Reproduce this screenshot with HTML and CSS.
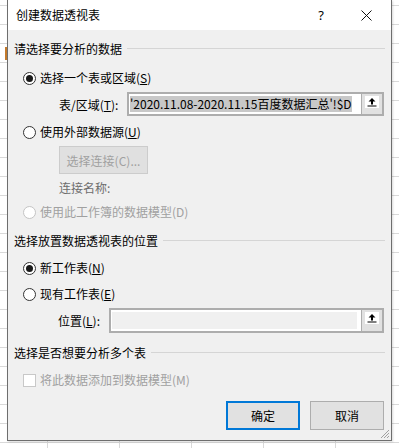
FILE: index.html
```html
<!DOCTYPE html>
<html lang="zh-CN">
<head>
  <meta charset="UTF-8">
  <title>创建数据透视表</title>
  <link rel="stylesheet" href="styles.css">
</head>
<body>
<div class="sheet">
  <div class="active-cell"></div>
  <div class="dialog">
    <div class="titlebar">
      <span class="title">创建数据透视表</span>
      <span class="help">?</span>
      <svg class="close" width="11" height="11" viewBox="0 0 11 11">
        <path d="M0.5 0.5 L10.5 10.5 M10.5 0.5 L0.5 10.5" stroke="#111" stroke-width="1" fill="none"/>
      </svg>
    </div>

    <div class="content">
      <!-- 数据来源 -->
      <div class="group-title mt-10"><span>请选择要分析的数据</span></div>

      <div class="option mt-12">
        <span class="radio checked"></span>
        <span>选择一个表或区域(<u>S</u>)</span>
      </div>
      <div class="field-row range-row mt-5">
        <label class="field-label">表/区域(<u>T</u>):</label>
        <div class="ref-box">
          <div class="ref-input"><span class="sel">'2020.11.08-2020.11.15百度数据汇总'!$D</span></div>
          <div class="ref-btn">
            <span class="ref-icon">
              <svg width="14" height="12" viewBox="0 0 14 12">
                <path d="M7 2 L10.5 5.5 L8 5.5 L8 8.5 L6 8.5 L6 5.5 L3.5 5.5 Z" fill="#000"/>
                <rect x="2.5" y="9.5" width="9" height="1" fill="#000"/>
              </svg>
            </span>
          </div>
        </div>
      </div>

      <div class="option mt-7">
        <span class="radio"></span>
        <span>使用外部数据源(<u>U</u>)</span>
      </div>
      <button class="conn-btn mt-5" disabled>选择连接(C)...</button>
      <div class="conn-name mt-6">连接名称:</div>
      <div class="option disabled mt-7">
        <span class="radio"></span>
        <span>使用此工作簿的数据模型(D)</span>
      </div>

      <!-- 放置位置 -->
      <div class="group-title mt-11"><span>选择放置数据透视表的位置</span></div>

      <div class="option mt-10">
        <span class="radio checked"></span>
        <span>新工作表(<u>N</u>)</span>
      </div>
      <div class="option mt-8">
        <span class="radio"></span>
        <span>现有工作表(<u>E</u>)</span>
      </div>
      <div class="field-row loc-row mt-5">
        <label class="field-label">位置(<u>L</u>):</label>
        <div class="ref-box">
          <div class="ref-input readonly"><div class="ro-fill"></div></div>
          <div class="ref-btn">
            <span class="ref-icon">
              <svg width="14" height="12" viewBox="0 0 14 12">
                <path d="M7 2 L10.5 5.5 L8 5.5 L8 8.5 L6 8.5 L6 5.5 L3.5 5.5 Z" fill="#000"/>
                <rect x="2.5" y="9.5" width="9" height="1" fill="#000"/>
              </svg>
            </span>
          </div>
        </div>
      </div>

      <!-- 多个表 -->
      <div class="group-title mt-11"><span>选择是否想要分析多个表</span></div>
      <div class="option disabled mt-10">
        <span class="check"></span>
        <span>将此数据添加到数据模型(M)</span>
      </div>

      <div class="actions mt-12">
        <button class="btn primary">确定</button>
        <button class="btn">取消</button>
      </div>
    </div>

    <svg class="grip" width="10" height="10" viewBox="0 0 10 10">
      <path d="M9 1 L1 9 M9 4 L4 9 M9 7 L7 9" stroke="#a0a0a0" stroke-width="1" fill="none"/>
    </svg>
  </div>
</div>
</body>
</html>
```

FILE: styles.css
```css
body {
  margin: 0;
  font-family: "Noto Sans CJK SC", "Noto Sans", sans-serif;
  font-size: 12px;
  color: #000;
  background: #fff;
}
.sheet {
  position: relative;
  width: 399px;
  height: 448px;
  overflow: hidden;
  background-color: #fff;
  background-image:
    repeating-linear-gradient(to bottom, transparent 0, transparent 5px, #d9d9d9 5px, #d9d9d9 6px, transparent 6px, transparent 19px),
    repeating-linear-gradient(to right, transparent 0, transparent 47px, #d9d9d9 47px, #d9d9d9 48px, transparent 48px, transparent 72px);
}
.active-cell {
  position: absolute;
  left: 5px;
  top: 47px;
  width: 2px;
  height: 13px;
  background: #c47a2c;
}
.dialog {
  position: relative;
  margin-left: 7px;
  width: 383px;
  height: 440px;
  border: 1px solid #6e6e6e;
  border-top: none;
  background: #f0f0f0;
  box-shadow: 1px 1px 2px rgba(0, 0, 0, 0.15);
}
.titlebar {
  height: 30px;
  background: #fff;
  display: flex;
  align-items: center;
  padding-left: 8px;
}
.title {
  flex: 1;
  line-height: 30px;
}
.help {
  font-family: "Noto Sans", sans-serif;
  font-size: 13px;
  margin-right: 37px;
  margin-top: -1px;
}
.close {
  margin-right: 19px;
}
.content {
  padding: 0 7px 0 6px;
  display: flex;
  flex-direction: column;
}
.mt-5 { margin-top: 5px; }
.mt-6 { margin-top: 6px; }
.mt-7 { margin-top: 7px; }
.mt-8 { margin-top: 8px; }
.mt-10 { margin-top: 10px; }
.mt-11 { margin-top: 11px; }
.mt-12 { margin-top: 12px; }
.group-title {
  height: 17px;
  line-height: 17px;
  display: flex;
  align-items: center;
  margin-right: -1px;
}
.group-title::after {
  content: "";
  flex: 1;
  height: 1px;
  background: #d5d5d5;
  margin-left: 5px;
}
.option {
  height: 18px;
  line-height: 18px;
  display: flex;
  align-items: center;
  padding-left: 9px;
  gap: 4px;
}
.option.disabled {
  color: #a0a0a0;
}
.radio {
  box-sizing: border-box;
  width: 13px;
  height: 13px;
  border: 1px solid #333;
  border-radius: 50%;
  background: #fff;
  display: flex;
  align-items: center;
  justify-content: center;
}
.radio.checked::after {
  content: "";
  width: 7px;
  height: 7px;
  border-radius: 50%;
  background: #1a1a1a;
}
.option.disabled .radio {
  border-color: #c4c4c4;
}
.check {
  box-sizing: border-box;
  width: 13px;
  height: 13px;
  border: 1px solid #c8c8c8;
  background: #fff;
}
.field-row {
  display: flex;
  align-items: center;
}
.range-row {
  height: 24px;
  padding-left: 45px;
}
.range-row .field-label {
  width: 68px;
}
.loc-row {
  height: 25px;
  padding-left: 44px;
}
.loc-row .field-label {
  width: 51px;
}
.ref-box {
  flex: 1;
  align-self: stretch;
  display: flex;
  box-sizing: border-box;
  border: 2px solid #adadad;
}
.ref-input {
  flex: 1;
  background: #fff;
  overflow: hidden;
  white-space: nowrap;
  display: flex;
  align-items: center;
  padding: 0 4px 0 1px;
  border-right: 1px solid #adadad;
}
.sel {
  background: #c8c8c8;
  line-height: 16px;
}
.ref-input.readonly {
  padding: 2px 4px 2px 1px;
  align-items: stretch;
}
.ro-fill {
  flex: 1;
  background: #f0f0f0;
}
.ref-btn {
  width: 20px;
  background: #e1e1e1;
  display: flex;
  justify-content: center;
  align-items: flex-start;
  padding-top: 2px;
}
.ref-icon {
  display: block;
  width: 14px;
  height: 12px;
  background: #fff;
}
.ref-icon svg {
  display: block;
}
.conn-btn {
  align-self: flex-start;
  margin-left: 45px;
  width: 89px;
  height: 28px;
  padding: 0;
  font: inherit;
  color: #a0a0a0;
  background: #e0e0e0;
  border: 1px solid #cccccc;
}
.conn-name {
  height: 16px;
  line-height: 16px;
  padding-left: 45px;
  color: #6d6d6d;
}
.actions {
  display: flex;
  justify-content: flex-end;
  gap: 10px;
}
.btn {
  box-sizing: border-box;
  width: 74px;
  height: 29px;
  padding: 0;
  font: inherit;
  color: #000;
  background: #e1e1e1;
  border: 1px solid #adadad;
}
.btn.primary {
  border: 2px solid #0078d7;
}
.grip {
  position: absolute;
  right: 1px;
  bottom: 1px;
}
```
